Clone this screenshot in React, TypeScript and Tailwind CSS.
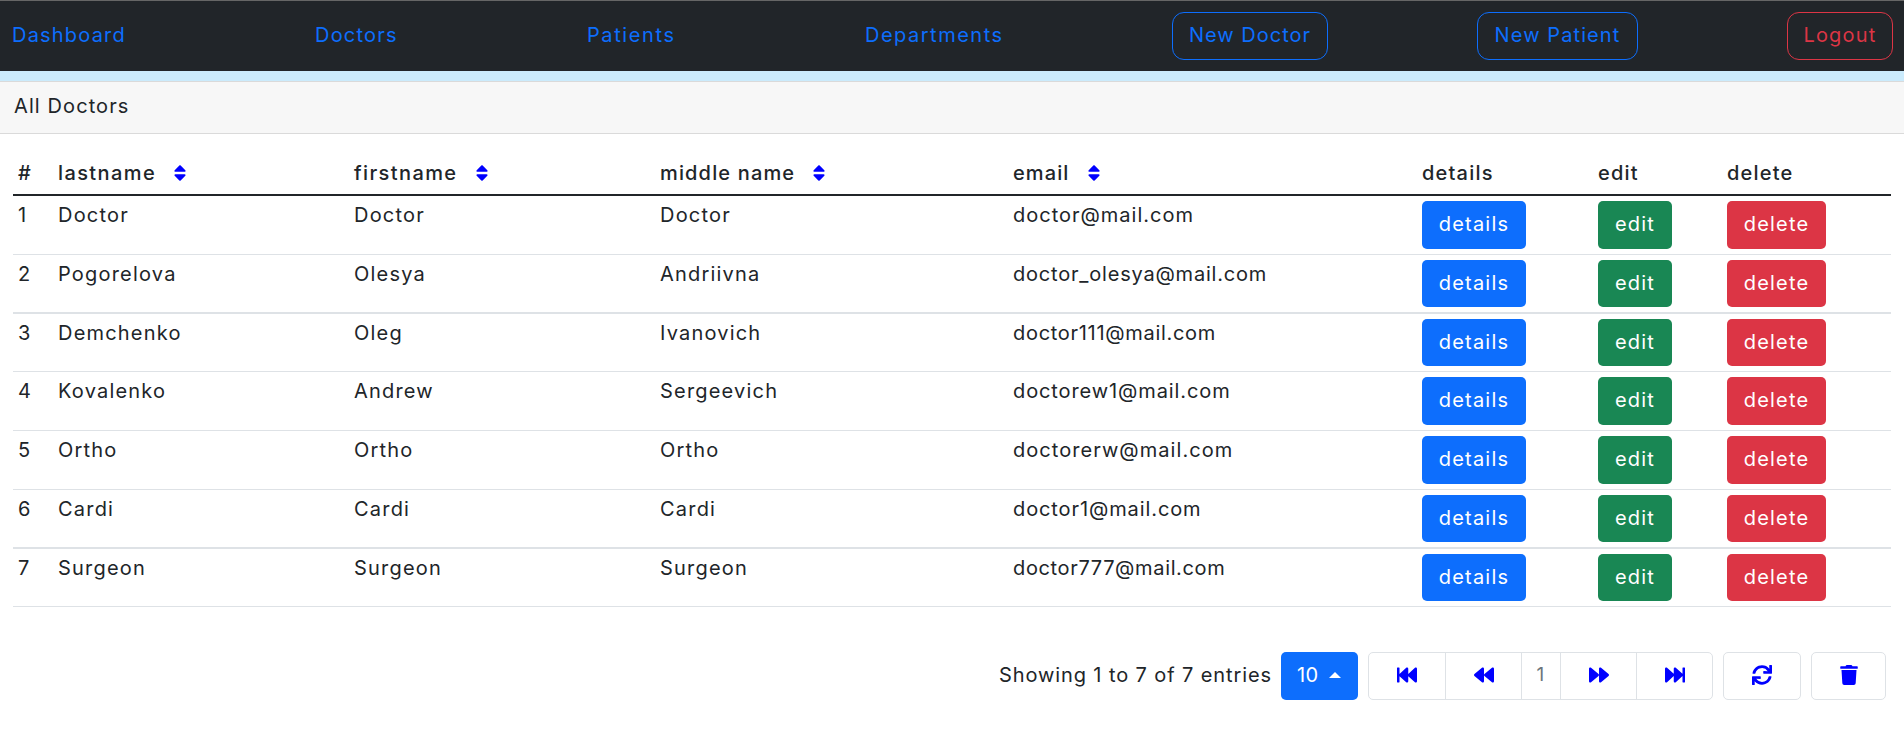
import {
  FaBackward,
  FaFastBackward,
  FaFastForward,
  FaForward,
  FaSort,
  FaSync,
  FaTrash,
} from "react-icons/fa";

const doctors = [
  { last: "Doctor", first: "Doctor", middle: "Doctor", email: "doctor@mail.com", row: "h-[59px] border-b", btn: "h-12", mail: "tracking-[1px]" },
  { last: "Pogorelova", first: "Olesya", middle: "Andriivna", email: "doctor_olesya@mail.com", row: "h-[59px] border-b-2", btn: "h-[47px]", mail: "tracking-[0.8px]" },
  { last: "Demchenko", first: "Oleg", middle: "Ivanovich", email: "doctor111@mail.com", row: "h-[58px] border-b", btn: "h-[47px]", mail: "tracking-[0.7px]" },
  { last: "Kovalenko", first: "Andrew", middle: "Sergeevich", email: "doctorew1@mail.com", row: "h-[59px] border-b", btn: "h-12", mail: "tracking-[0.9px]" },
  { last: "Ortho", first: "Ortho", middle: "Ortho", email: "doctorerw@mail.com", row: "h-[59px] border-b", btn: "h-12", mail: "tracking-[1.05px]" },
  { last: "Cardi", first: "Cardi", middle: "Cardi", email: "doctor1@mail.com", row: "h-[59px] border-b-2", btn: "h-[47px]", mail: "tracking-[0.9px]" },
  { last: "Surgeon", first: "Surgeon", middle: "Surgeon", email: "doctor777@mail.com", row: "h-[58px] border-b", btn: "h-[47px]", mail: "tracking-[0.65px]" },
];

const columns = "grid grid-cols-[40px_296px_306px_353px_409px_176px_129px_1fr] pl-[5px]";

function SortHead({ label, spacing }: { label: string; spacing: string }) {
  return (
    <div className={`flex items-center ${spacing}`}>
      <span>{label}</span>
      <FaSort className="mb-px text-[20px] text-[#0000ff]" />
    </div>
  );
}

export default function App() {
  return (
    <div className="h-[738px] overflow-hidden bg-white font-['Inter','Noto_Sans',sans-serif] text-[20px] font-normal leading-[28px] tracking-[1.2px] text-[#212529]">
      <nav className="flex h-[71px] items-center border-t border-[#666666] bg-[#212529] pl-3 text-[#0d6efd] whitespace-nowrap">
        <a className="w-[303px] pb-[2px]">Dashboard</a>
        <a className="w-[272px] pb-[2px]">Doctors</a>
        <a className="w-[278px] pb-[2px] tracking-[1.6px]">Patients</a>
        <a className="w-[307px] pb-[2px] tracking-[1.5px]">Departments</a>
        <button className="mr-[149px] h-12 w-[156px] rounded-xl border border-[#0d6efd] pb-[2px] tracking-[1px]">New Doctor</button>
        <button className="mr-[149px] h-12 w-[161px] rounded-xl border border-[#0d6efd] pb-[2px] tracking-[1.1px]">New Patient</button>
        <button className="h-12 w-[106px] rounded-xl border border-[#dc3545] pb-[2px] text-[#dc3545]">Logout</button>
      </nav>
      <div className="h-[10px] bg-[#cbebfc]" />
      <header className="flex h-[53px] items-center border-t border-b border-[#dadada] bg-[#f7f7f7] pb-[3px] pl-[14px] tracking-[1.1px]">
        All Doctors
      </header>

      <main className="pl-[13px] pr-[13px]">
        <div className={`${columns} h-[62px] items-end border-b-2 border-[#212529] pb-[7px] font-medium tracking-[1.2px]`}>
          <div>#</div>
          <SortHead label="lastname" spacing="gap-[14px] tracking-[1.4px]" />
          <SortHead label="firstname" spacing="gap-[14px] tracking-[1.4px]" />
          <SortHead label="middle name" spacing="gap-[14px] tracking-[1.15px]" />
          <SortHead label="email" spacing="gap-[15px] tracking-[1.1px]" />
          <div>details</div>
          <div>edit</div>
          <div>delete</div>
        </div>
        {doctors.map((d, i) => (
          <div key={d.email} className={`${columns} ${d.row} items-start border-[#dee2e6] pt-[5px]`}>
            <div>{i + 1}</div>
            <div>{d.last}</div>
            <div>{d.first}</div>
            <div>{d.middle}</div>
            <div className={d.mail}>{d.email}</div>
            <button className={`${d.btn} w-[104px] rounded-[5px] bg-[#0d6efd] pb-[2px] text-white`}>details</button>
            <button className={`${d.btn} w-[74px] rounded-[5px] bg-[#198754] pb-[2px] text-white`}>edit</button>
            <button className={`${d.btn} w-[99px] rounded-[5px] bg-[#dc3545] pb-[2px] text-white`}>delete</button>
          </div>
        ))}
      </main>

      <footer className="mt-[45px] flex items-center justify-end pr-[18px]">
        <span className="mr-[9px] pb-[2px] tracking-[0.9px]">Showing 1 to 7 of 7 entries</span>
        <button className="mr-[10px] flex h-12 w-[77px] items-center rounded-[5px] bg-[#0d6efd] pb-[2px] pl-4 tracking-[0.3px] text-white">
          10
          <span className="ml-[11px] border-x-[6px] border-b-[6px] border-x-transparent border-b-white" />
        </button>
        <div className="mr-[10px] flex h-12 w-[345px] divide-x divide-[#dee2e6] rounded-[5px] border border-[#dee2e6] text-[20px] text-[#0000ff]">
          <button className="flex w-[77px] items-center justify-center pb-[2px]"><FaFastBackward /></button>
          <button className="flex w-[76px] items-center justify-center pb-[2px]"><FaBackward /></button>
          <span className="flex w-[39px] items-center justify-center pb-[2px] text-[19px] text-[#6c757d]">1</span>
          <button className="flex w-[76px] items-center justify-center pb-[2px]"><FaForward /></button>
          <button className="flex flex-1 items-center justify-center pb-[2px]"><FaFastForward /></button>
        </div>
        <button className="mr-[10px] flex h-12 w-[78px] items-center justify-center rounded-[5px] border border-[#dee2e6] pb-[2px] text-[20px] text-[#0000ff]"><FaSync /></button>
        <button className="flex h-12 w-[75px] items-center justify-center rounded-[5px] border border-[#dee2e6] pb-[2px] text-[20px] text-[#0000ff]"><FaTrash /></button>
      </footer>
    </div>
  );
}
